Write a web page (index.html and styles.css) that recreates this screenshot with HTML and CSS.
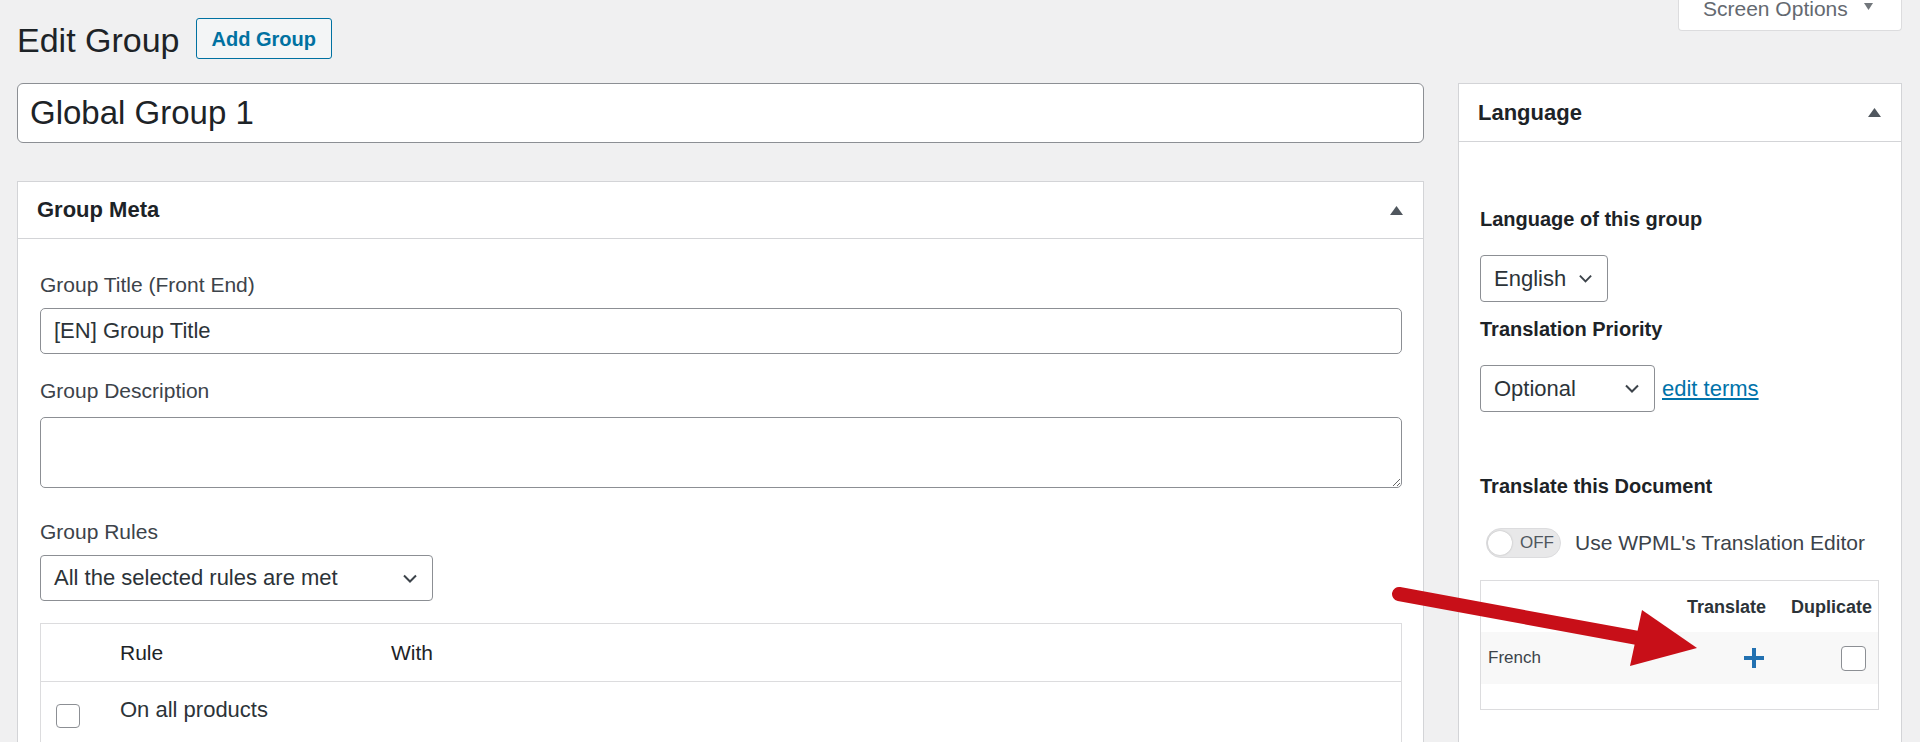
FILE: index.html
```html
<!DOCTYPE html>
<html lang="en">
<head>
    <meta charset="UTF-8">
    <meta name="viewport" content="width=device-width, initial-scale=1.0">
    <title>Edit Group</title>
    <link rel="stylesheet" href="styles.css">
</head>
<body>

    <div class="page-head">
        <h1 class="page-title">Edit Group</h1>
        <a class="page-title-action" href="#">Add Group</a>
        <button class="screen-tab" type="button">
            Screen Options
            <svg width="9" height="7" viewBox="0 0 9 7"><path d="M0 0h9L4.5 7z" fill="#72777c"/></svg>
        </button>
    </div>

    <div class="columns">
        <!-- main column -->
        <div class="main-col">
            <input class="title-input" type="text" value="Global Group 1">

            <div class="postbox meta-box">
                <div class="postbox-head">
                    <h2>Group Meta</h2>
                    <svg class="head-arrow" width="13" height="9" viewBox="0 0 13 9"><path d="M6.5 0L13 9H0z" fill="#50575e"/></svg>
                </div>
                <div class="postbox-body">
                    <label class="field-label lbl-title" for="gtitle">Group Title (Front End)</label>
                    <input class="text-field" id="gtitle" type="text" value="[EN] Group Title">

                    <label class="field-label lbl-desc" for="gdesc">Group Description</label>
                    <textarea class="text-area" id="gdesc"></textarea>

                    <label class="field-label lbl-rules">Group Rules</label>
                    <div class="select rules-select">
                        <span>All the selected rules are met</span>
                        <svg width="16" height="9" viewBox="0 0 16 9"><path d="M2 1.5l6 6 6-6" fill="none" stroke="#3c434a" stroke-width="2"/></svg>
                    </div>

                    <div class="rules-table">
                        <div class="rules-row rules-head">
                            <span></span>
                            <span>Rule</span>
                            <span>With</span>
                        </div>
                        <div class="rules-row">
                            <span class="cb-cell"><span class="checkbox"></span></span>
                            <span>On all products</span>
                            <span></span>
                        </div>
                    </div>
                </div>
            </div>
        </div>

        <!-- sidebar -->
        <div class="side-col">
            <div class="postbox lang-box">
                <div class="postbox-head">
                    <h2>Language</h2>
                    <svg class="head-arrow" width="13" height="9" viewBox="0 0 13 9"><path d="M6.5 0L13 9H0z" fill="#50575e"/></svg>
                </div>
                <div class="postbox-body side-body">
                    <div class="side-label lbl-lang">Language of this group</div>
                    <div class="select lang-select">
                        <span>English</span>
                        <svg width="15" height="9" viewBox="0 0 16 9"><path d="M2 1.5l6 6 6-6" fill="none" stroke="#3c434a" stroke-width="2"/></svg>
                    </div>

                    <div class="side-label lbl-priority">Translation Priority</div>
                    <div class="priority-line">
                        <div class="select priority-select">
                            <span>Optional</span>
                            <svg width="16" height="9" viewBox="0 0 16 9"><path d="M2 1.5l6 6 6-6" fill="none" stroke="#3c434a" stroke-width="2"/></svg>
                        </div>
                        <a class="edit-terms" href="#">edit terms</a>
                    </div>

                    <div class="side-label lbl-translate">Translate this Document</div>
                    <div class="editor-line">
                        <span class="switch"><span class="knob"></span><span class="switch-text">OFF</span></span>
                        <span class="editor-text">Use WPML's Translation Editor</span>
                    </div>

                    <div class="trans-box">
                        <div class="trans-row trans-head">
                            <span></span>
                            <span class="col-translate">Translate</span>
                            <span class="col-duplicate">Duplicate</span>
                        </div>
                        <div class="trans-row trans-item">
                            <span class="lang-name">French</span>
                            <span class="col-translate">
                                <svg width="20" height="20" viewBox="0 0 20 20"><path d="M8 0h4v8h8v4h-8v8H8v-8H0V8h8z" fill="#2271b1"/></svg>
                            </span>
                            <span class="col-duplicate"><span class="checkbox small-box"></span></span>
                        </div>
                    </div>
                </div>
            </div>
        </div>
    </div>

    <!-- annotation arrow drawn over the page -->
    <svg class="red-arrow" width="1920" height="742" viewBox="0 0 1920 742">
        <line x1="1399" y1="594" x2="1638" y2="638" stroke="#c80f18" stroke-width="14" stroke-linecap="round"/>
        <polygon points="1642,610 1697,648 1630,666" fill="#c80f18"/>
    </svg>

</body>
</html>
```

FILE: styles.css
```css
body {
    margin: 0;
    height: 742px;
    overflow: hidden;
    position: relative;
    background-color: #f0f0f1;
    font-family: "Liberation Sans", Arial, Helvetica, sans-serif;
    color: #3c434a;
}

/* top bar */
.page-head {
    display: flex;
    align-items: flex-start;
    height: 60px;
    padding: 0 18px 0 17px;
}

.page-title {
    margin: 20px 0 0;
    font-size: 34px;
    line-height: 40px;
    font-weight: 400;
    color: #1d2327;
}

.page-title-action {
    margin: 18px 0 0 16px;
    height: 41px;
    box-sizing: border-box;
    padding: 1px 15px 0;
    border: 1px solid #0071a1;
    border-radius: 3px;
    background-color: #f3f5f6;
    color: #0071a1;
    font-size: 20px;
    font-weight: bold;
    line-height: 38px;
    text-decoration: none;
}

.screen-tab {
    margin-left: auto;
    width: 224px;
    height: 31px;
    box-sizing: border-box;
    display: flex;
    align-items: flex-start;
    padding: 0 0 0 24px;
    border: 1px solid #dcdcde;
    border-top: none;
    border-radius: 0 0 4px 4px;
    background-color: #fff;
    color: #646970;
    font-family: inherit;
    font-size: 21px;
    line-height: 18px;
}

.screen-tab svg {
    margin: 3px 0 0 16px;
}

/* columns */
.columns {
    display: flex;
    gap: 34px;
    margin-top: 23px;
    padding: 0 18px 0 17px;
}

.main-col {
    flex: 1;
}

.side-col {
    width: 444px;
}

.title-input {
    display: block;
    width: 100%;
    height: 60px;
    box-sizing: border-box;
    padding: 0 12px;
    border: 1px solid #8c8f94;
    border-radius: 6px;
    background-color: #fff;
    font-family: inherit;
    font-size: 33px;
    color: #1d2327;
}

/* meta boxes */
.postbox {
    background-color: #fff;
    border: 1px solid #d3d4d7;
    min-height: 700px;
}

.meta-box {
    margin-top: 38px;
}

.postbox-head {
    display: flex;
    align-items: center;
    justify-content: space-between;
    height: 56px;
    padding: 0 20px 0 19px;
    border-bottom: 1px solid #d3d4d7;
}

.lang-box .postbox-head {
    height: 57px;
}

.postbox-head h2 {
    margin: 0;
    font-size: 22px;
    line-height: 24px;
    color: #1d2327;
}

.postbox-body {
    padding: 34px 21px 0 22px;
}

.field-label {
    display: block;
    font-size: 21px;
    line-height: 24px;
    color: #3c434a;
}

.lbl-title {
    margin-bottom: 11px;
}

.lbl-desc {
    margin: 25px 0 14px;
}

.lbl-rules {
    margin: 32px 0 11px;
}

.text-field,
.text-area {
    display: block;
    width: 100%;
    box-sizing: border-box;
    padding: 0 13px;
    border: 1px solid #8c8f94;
    border-radius: 5px;
    background-color: #fff;
    font-family: inherit;
    font-size: 22px;
    color: #2c3338;
}

.text-field {
    height: 46px;
}

.text-area {
    height: 71px;
    resize: vertical;
}

/* fake selects */
.select {
    display: flex;
    align-items: center;
    justify-content: space-between;
    box-sizing: border-box;
    padding: 0 14px 0 13px;
    border: 1px solid #8c8f94;
    border-radius: 4px;
    background-color: #fff;
    color: #2c3338;
}

.rules-select {
    width: 393px;
    height: 46px;
    font-size: 22px;
}

/* rules table */
.rules-table {
    margin-top: 22px;
    border: 1px solid #dcdcde;
    min-height: 300px;
}

.rules-row {
    display: grid;
    grid-template-columns: 79px 271px 1fr;
    font-size: 21px;
    line-height: 24px;
    color: #2c3338;
}

.rules-head {
    height: 57px;
    align-items: center;
    border-bottom: 1px solid #dcdcde;
    color: #1d2327;
}

.rules-row .cb-cell {
    padding: 22px 0 0 15px;
}

.rules-row:not(.rules-head) span:nth-child(2) {
    padding-top: 16px;
    font-size: 22px;
}

.checkbox {
    display: block;
    width: 24px;
    height: 24px;
    box-sizing: border-box;
    border: 1px solid #8c8f94;
    border-radius: 4px;
    background-color: #fff;
}

/* sidebar */
.side-body {
    padding: 65px 22px 0 21px;
}

.side-label {
    font-size: 20px;
    line-height: 24px;
    font-weight: bold;
    color: #1d2327;
}

.lang-select {
    width: 128px;
    height: 47px;
    margin-top: 24px;
    font-size: 22px;
}

.lbl-priority {
    margin-top: 15px;
}

.priority-line {
    display: flex;
    align-items: center;
    margin-top: 24px;
}

.priority-select {
    width: 175px;
    height: 47px;
    font-size: 22px;
}

.edit-terms {
    margin-left: 7px;
    font-size: 22px;
    color: #0073aa;
}

.lbl-translate {
    margin-top: 62px;
}

.editor-line {
    display: flex;
    align-items: center;
    margin-top: 30px;
    padding-left: 6px;
}

.switch {
    display: flex;
    align-items: center;
    width: 75px;
    height: 30px;
    box-sizing: border-box;
    border: 1px solid #dcdcde;
    border-radius: 15px;
    background-color: #e8e8e9;
}

.knob {
    width: 24px;
    height: 24px;
    margin-left: 1px;
    border-radius: 50%;
    background-color: #fff;
    box-shadow: 0 0 2px rgba(0, 0, 0, 0.25);
}

.switch-text {
    margin-left: 8px;
    font-size: 17px;
    color: #50575e;
}

.editor-text {
    margin-left: 14px;
    font-size: 21px;
    color: #3c434a;
}

/* translation table */
.trans-box {
    margin-top: 22px;
    height: 130px;
    box-sizing: border-box;
    border: 1px solid #dcdcde;
}

.trans-row {
    display: grid;
    grid-template-columns: 1fr 100px 106px;
    font-size: 17px;
}

.trans-head {
    height: 51px;
    padding-top: 16px;
    box-sizing: border-box;
    line-height: 20px;
    font-size: 18px;
    font-weight: bold;
    color: #2c3338;
}

.trans-head .col-translate,
.trans-head .col-duplicate {
    text-align: right;
    padding-right: 6px;
}

.trans-item {
    height: 52px;
    align-items: center;
    background-color: #f8f8f8;
    color: #3c434a;
}

.lang-name {
    padding-left: 7px;
}

.trans-item .col-translate {
    display: flex;
    justify-content: flex-end;
    padding-right: 8px;
}

.trans-item .col-duplicate {
    display: flex;
    justify-content: flex-end;
    padding-right: 12px;
}

.small-box {
    width: 25px;
    height: 25px;
}

/* annotation */
.red-arrow {
    position: absolute;
    left: 0;
    top: 0;
    pointer-events: none;
}
```
